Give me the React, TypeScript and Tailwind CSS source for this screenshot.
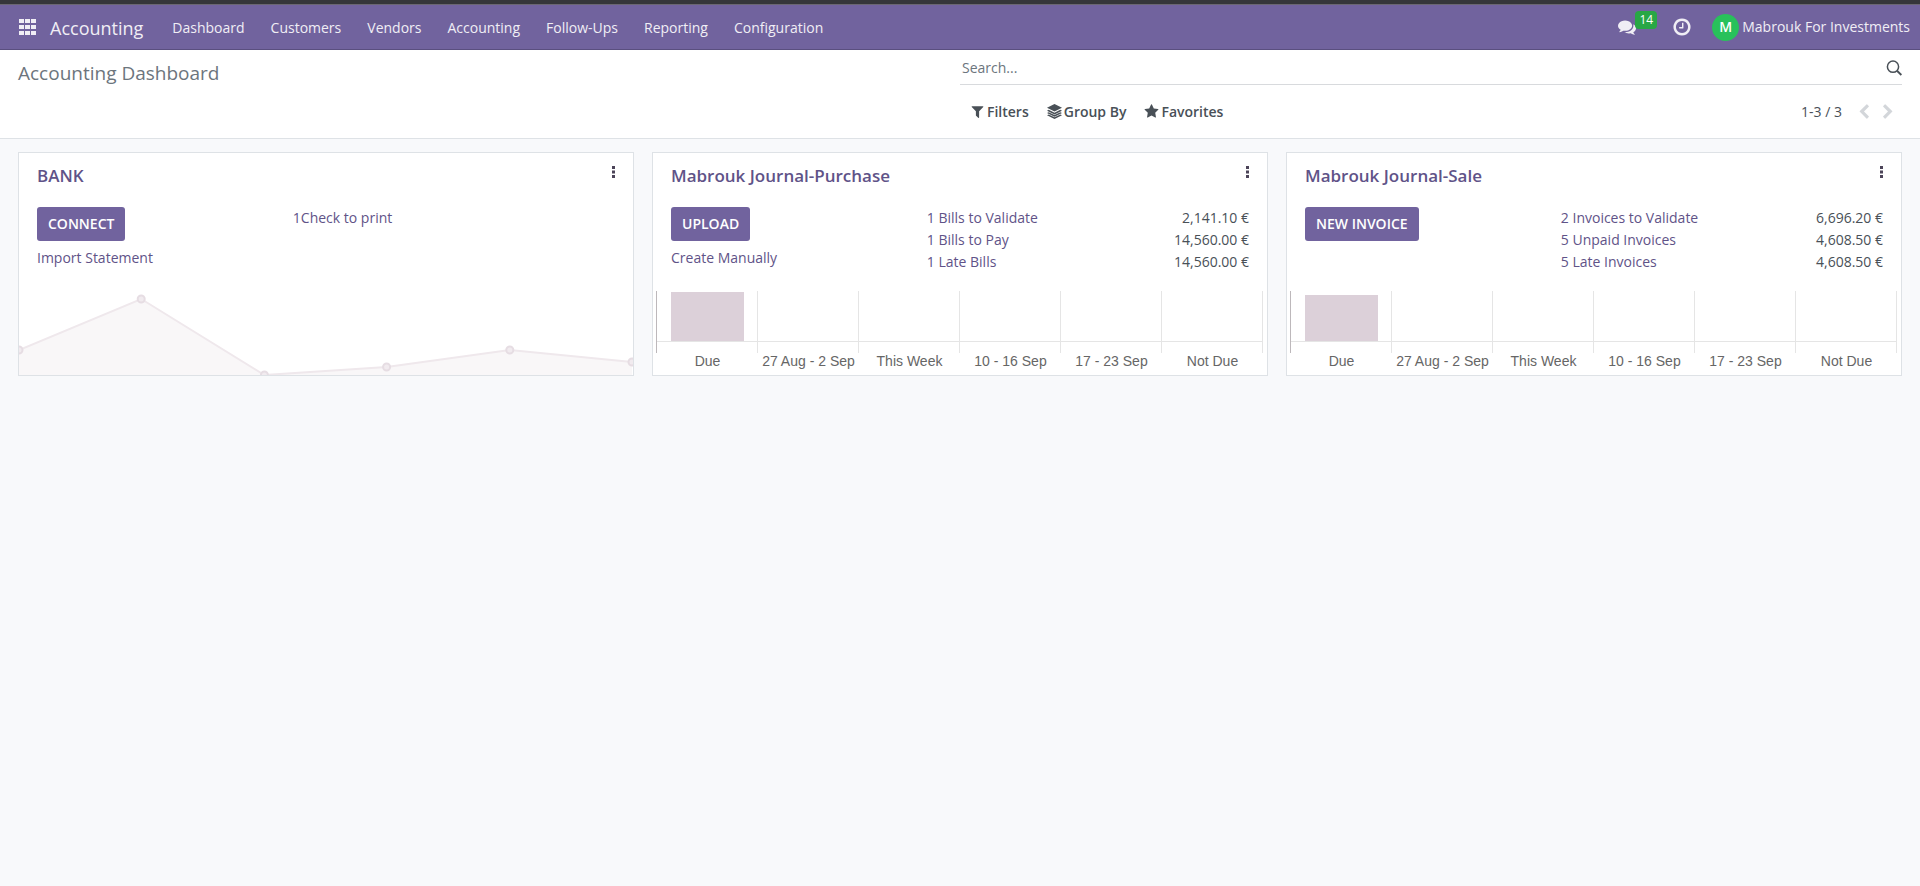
import { FC, ReactNode } from "react";

type IconProps = { path: string; className?: string };

const icons = {
  clock:
    "M1024 544v448q0 14-9 23t-23 9h-320q-14 0-23-9t-9-23v-64q0-14 9-23t23-9h224v-352q0-14 9-23t23-9h64q14 0 23 9t9 23zm416 352q0-148-73-273t-198-198-273-73-273 73-198 198-73 273 73 273 198 198 273 73 273-73 198-198 73-273zm224 0q0 209-103 385.5t-279.5 279.5-385.5 103-385.5-103-279.5-279.5-103-385.5 103-385.5 279.5-279.5 385.5-103 385.5 103 279.5 279.5 103 385.5z",
  filter:
    "M1595 295q17 41-14 70l-493 493v742q0 42-39 59-13 5-25 5-27 0-45-19l-256-256q-19-19-19-45v-486l-493-493q-31-29-14-70 17-39 59-39h1280q42 0 59 39z",
  star: "M1728 647q0 22-26 48l-363 354 86 500q1 7 1 20 0 21-10.5 35.5t-30.5 14.5q-19 0-40-12l-449-236-449 236q-22 12-40 12-21 0-31.5-14.5t-10.5-35.5q0-6 2-20l86-500-364-354q-25-27-25-48 0-37 56-46l502-73 225-455q19-41 49-41t49 41l225 455 502 73q56 9 56 46z",
  left: "M1427 301l-531 531 531 531q19 19 19 45t-19 45l-166 166q-19 19-45 19t-45-19l-742-742q-19-19-19-45t19-45l742-742q19-19 45-19t45 19l166 166q19 19 19 45t-19 45z",
  right:
    "M1363 877l-742 742q-19 19-45 19t-45-19l-166-166q-19-19-19-45t19-45l531-531-531-531q-19-19-19-45t19-45l166-166q19-19 45-19t45 19l742 742q19 19 19 45t-19 45z",
  comments:
    "M1408 768q0 139-94 257t-256.5 186.5-353.5 68.5q-86 0-176-16-124 88-278 128-36 9-86 16h-3q-11 0-20.5-8t-11.5-21q-1-3-1-6.5t.5-6.5 2-6l2.5-5 3.5-5.5 4-5 4.5-5 4-4.5q5-6 23-25t26-29.5 22.5-29 25-38.5 20.5-44q-124-72-195-177t-71-224q0-139 94-257t256.5-186.5 353.5-68.5 353.5 68.5 256.5 186.5 94 257zm384 256q0 120-71 224.5t-195 176.5q10 24 20.5 44t25 38.5 22.5 29 26 29.5 23 25q1 1 4 4.5t4.5 5 4 5 3.5 5.5l2.5 5 2 6 .5 6.5-1 6.5q-3 14-13 22t-22 7q-50-7-86-16-154-40-278-128-90 16-176 16-271 0-472-132 58 4 88 4 161 0 309-45t264-129q125-92 192-212t67-254q0-77-23-152 129 71 204 178t75 230z",
};

const Icon: FC<IconProps> = ({ path, className }) => (
  <svg viewBox="0 0 1792 1792" fill="currentColor" className={className} aria-hidden="true">
    <path d={path} />
  </svg>
);

const menu = ["Dashboard", "Customers", "Vendors", "Accounting", "Follow-Ups", "Reporting", "Configuration"];

const Navbar: FC = () => (
  <header className="flex h-[46px] items-center border-t border-t-[#6b6773] border-b border-b-[#5a4f7f] bg-[#71639e] text-[#f0eef5]">
    <button aria-label="Apps" className="ml-[19px] mr-[14px]">
      <svg viewBox="0 0 17 16" fill="currentColor" className="h-4 w-[17px]">
        {[0, 6, 12].map((x) =>
          [0, 6, 12].map((y) => <rect key={`${x}-${y}`} x={x} y={y} width="5" height="4" />)
        )}
      </svg>
    </button>
    <a href="#" className="pt-[2px] text-lg">
      Accounting
    </a>
    <nav className="ml-4 flex pt-[2px] text-sm">
      {menu.map((item) => (
        <a key={item} href="#" className="px-[13px]">
          {item}
        </a>
      ))}
    </nav>
    <div className="ml-auto flex items-center pr-[10px]">
      <button aria-label="Messages" className="relative mr-9">
        <Icon path={icons.comments} className="size-[18px]" />
        <span className="absolute -top-[7px] left-[17px] flex h-[18px] w-[22px] items-center justify-center rounded bg-[#28a745] text-xs text-white">
          14
        </span>
      </button>
      <button aria-label="Activities" className="mr-5">
        <Icon path={icons.clock} className="size-5" />
      </button>
      <button className="flex items-center gap-[3px] text-sm">
        <span className="flex size-[27px] items-center justify-center rounded-full bg-[#28c15b] text-sm font-semibold text-white">
          M
        </span>
        Mabrouk For Investments
      </button>
    </div>
  </header>
);

const FilterButton: FC<{ icon: ReactNode; text: string }> = ({ icon, text }) => (
  <button className="flex items-center gap-[2px] text-sm font-semibold text-[#495057]">
    {icon}
    {text}
  </button>
);

const ControlPanel: FC = () => (
  <div className="grid grid-cols-2 border-b border-[#dee2e6] bg-white px-[18px]">
    <h1 className="pt-[9px] text-[19px] leading-7 text-[#6c757d]">Accounting Dashboard</h1>
    <div className="h-[88px]">
      <div className="flex h-[35px] items-center border-b border-[#d8dadd] pt-[2px]">
        <input
          aria-label="Search"
          placeholder="Search..."
          className="w-full bg-transparent px-[2px] text-sm outline-none placeholder:text-[#6c757d]"
        />
        <button aria-label="Search" className="text-[#495057]">
          <svg viewBox="0 0 16 16" fill="none" stroke="currentColor" className="size-4">
            <circle cx="7" cy="6.7" r="5.6" strokeWidth="1.5" />
            <path d="M11 10.8L15.4 15" strokeWidth="1.9" />
          </svg>
        </button>
      </div>
      <div className="flex h-[53px] items-center pl-[10px] pr-[6px]">
        <div className="flex items-center gap-[18px]">
          <FilterButton icon={<Icon path={icons.filter} className="size-[15px]" />} text="Filters" />
          <FilterButton
            icon={
              <svg viewBox="0 0 16 16" fill="currentColor" className="size-[15px]">
                <path d="M8 0l8 4-8 4-8-4z" />
                <path d="M0 7.1l1.8-.9L8 9.3l6.2-3.1 1.8.9-8 4z" />
                <path d="M0 9.6l1.8-.9L8 11.8l6.2-3.1 1.8.9-8 4z" />
                <path d="M0 12l1.8-.9L8 14.2l6.2-3.1 1.8.9-8 4z" />
              </svg>
            }
            text="Group By"
          />
          <FilterButton icon={<Icon path={icons.star} className="size-[15px]" />} text="Favorites" />
        </div>
        <div className="ml-auto flex items-center text-[#d3d6da]">
          <span className="mr-[14px] text-sm text-[#495057]">1-3 / 3</span>
          <button aria-label="Previous" className="mr-2">
            <Icon path={icons.left} className="size-4" />
          </button>
          <button aria-label="Next">
            <Icon path={icons.right} className="size-4" />
          </button>
        </div>
      </div>
    </div>
  </div>
);

type Line = { label: string; amount?: string };
type CardProps = { title: string; action: string; link?: string; lines: Line[]; children: ReactNode };

const JournalCard: FC<CardProps> = ({ title, action, link, lines, children }) => (
  <section className="flex flex-col border border-[#dee2e6] bg-white text-sm text-[#5f5388]">
    <div className="flex justify-between pl-[18px] pr-[15px] pt-[9px]">
      <h2 className="text-[17px] font-semibold leading-7">
        <a href="#">{title}</a>
      </h2>
      <button aria-label={`${title} options`} className="flex h-5 w-[10px] items-center justify-center text-[#4c4459]">
        <svg viewBox="0 0 3 12" fill="currentColor" className="h-3 w-[3px]">
          <rect width="3" height="3" />
          <rect y="4.5" width="3" height="3" />
          <rect y="9" width="3" height="3" />
        </svg>
      </button>
    </div>
    <div className="flex h-[101px] pt-[17px]">
      <div className="w-5/12 pl-[18px]">
        <button className="mb-[6px] block h-[34px] rounded-[3px] bg-[#71639e] px-[11px] font-semibold text-white">
          {action}
        </button>
        {link && (
          <a href="#" className="leading-[22px]">
            {link}
          </a>
        )}
      </div>
      <ul className="flex-1 px-[18px] leading-[22px]">
        {lines.map((line) => (
          <li key={line.label} className="flex justify-between">
            <a href="#">{line.label}</a>
            <span className="text-[#495057]">{line.amount}</span>
          </li>
        ))}
      </ul>
    </div>
    {children}
  </section>
);

const points = [
  [0, 59],
  [122, 8],
  [245, 84],
  [367, 76],
  [490, 59],
  [612, 71],
];

const LineChart: FC = () => (
  <svg viewBox="0 0 613 84" preserveAspectRatio="none" className="h-[84px] w-full" role="img" aria-label="Bank balance">
    <path d={`M${points.join("L")}V84H0Z`} fill="#f9f7f8" />
    <path d={`M${points.join("L")}`} fill="none" stroke="#efe8ec" strokeWidth="2" />
    {points.map(([x, y]) => (
      <circle key={x} cx={x} cy={y} r="3.5" fill="#f1ebef" stroke="#e6dde3" strokeWidth="2" />
    ))}
  </svg>
);

const periods = ["Due", "27 Aug - 2 Sep", "This Week", "10 - 16 Sep", "17 - 23 Sep", "Not Due"];

const BarChart: FC<{ value: number }> = ({ value }) => (
  <div className="ml-[3px] mr-1 flex h-[84px] items-start font-['Liberation_Sans',sans-serif] text-[#666]">
    <div className="h-[62px] w-px bg-[#bdb8bb]" />
    <div className="grid flex-1 grid-cols-6">
      {periods.map((period, i) => (
        <div key={period} className="flex flex-col items-center">
          <div className="flex h-[51px] w-full items-end justify-center border-r border-b border-[#e5e5e5]">
            {i === 0 && <div className="w-[73px] bg-[#dcd0d9]" style={{ height: value }} />}
          </div>
          <div className="h-[11px] w-full border-r border-[#e5e5e5]" />
          <span className="whitespace-nowrap leading-4">{period}</span>
        </div>
      ))}
    </div>
  </div>
);

export default function App() {
  return (
    <div className="min-h-screen bg-[#f8f9fb] font-['Open_Sans',sans-serif]">
      <div className="h-1 bg-[#35363a]" />
      <Navbar />
      <ControlPanel />
      <main className="grid grid-cols-3 gap-[18px] px-[18px] pt-[13px]">
        <JournalCard title="BANK" action="CONNECT" link="Import Statement" lines={[{ label: "1Check to print" }]}>
          <LineChart />
        </JournalCard>
        <JournalCard
          title="Mabrouk Journal-Purchase"
          action="UPLOAD"
          link="Create Manually"
          lines={[
            { label: "1 Bills to Validate", amount: "2,141.10 €" },
            { label: "1 Bills to Pay", amount: "14,560.00 €" },
            { label: "1 Late Bills", amount: "14,560.00 €" },
          ]}
        >
          <BarChart value={49} />
        </JournalCard>
        <JournalCard
          title="Mabrouk Journal-Sale"
          action="NEW INVOICE"
          lines={[
            { label: "2 Invoices to Validate", amount: "6,696.20 €" },
            { label: "5 Unpaid Invoices", amount: "4,608.50 €" },
            { label: "5 Late Invoices", amount: "4,608.50 €" },
          ]}
        >
          <BarChart value={46} />
        </JournalCard>
      </main>
    </div>
  );
}
